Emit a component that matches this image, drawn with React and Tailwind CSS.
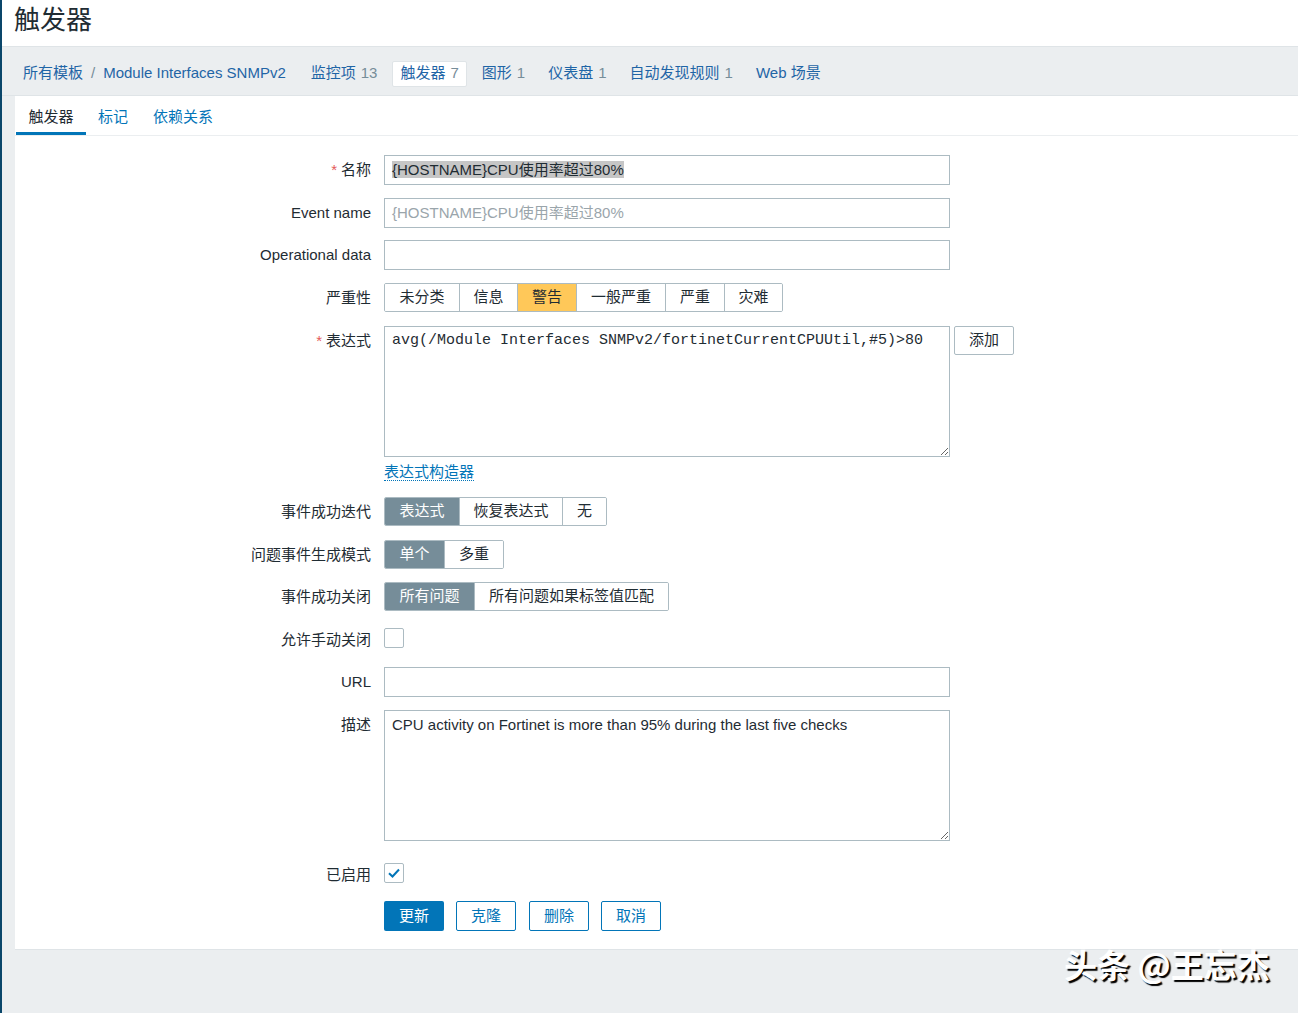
import React from "react";

const F = { fontFamily: '"Liberation Sans", Arial, "Noto Sans CJK SC", sans-serif' };

function Label({ children, req }) {
  return (
    <div className="w-[369px] shrink-0 pr-[13px] text-right text-[15px] leading-[30px] text-[#1f2c33]">
      {req && <span className="mr-[4px] text-[#e45959]">*</span>}
      {children}
    </div>
  );
}

function Row({ label, req, mt, children }) {
  return (
    <div className="flex items-start" style={{ marginTop: mt }}>
      <Label req={req}>{label}</Label>
      <div className="flex items-start">{children}</div>
    </div>
  );
}

function Seg({ items, active, activeCls }) {
  return (
    <div className="flex h-[29px] rounded-[2px] border border-[#acbbc2] overflow-hidden">
      {items.map(([t, w], i) => (
        <div
          key={t}
          className={
            "flex items-center justify-center text-[15px] " +
            (i > 0 ? "border-l border-[#acbbc2] " : "") +
            (i === active ? activeCls : "bg-white text-[#1f2c33]")
          }
          style={{ width: w }}
        >
          {t}
        </div>
      ))}
    </div>
  );
}

function Box({ children, cls = "" }) {
  return (
    <div className={"w-[566px] h-[30px] border border-[#acbbc2] bg-white px-[7px] text-[15px] leading-[28px] " + cls}>
      {children}
    </div>
  );
}

export default function App() {
  const nav = [
    ["监控项", "13"],
    ["触发器", "7", true],
    ["图形", "1"],
    ["仪表盘", "1"],
    ["自动发现规则", "1"],
    ["Web 场景", ""],
  ];
  return (
    <div className="relative flex min-h-[1013px] w-[1298px] bg-[#ebeef0] overflow-hidden" style={F}>
      <div className="w-[2px] shrink-0 bg-[#0a466a]" />
      <div className="flex flex-1 flex-col">
        <div className="h-[47px] bg-white border-b border-[#dfe4e7] pl-[12px]">
          <div className="text-[26px] leading-[40px] text-[#1f2c33]">触发器</div>
        </div>
        <div className="flex h-[49px] items-center border-b border-[#dfe4e7] pl-[13px] pt-[5px] text-[15px]">
          <div className="px-[8px] text-[#1f65a6]">所有模板</div>
          <div className="text-[#768d99]">/</div>
          <div className="px-[8px] text-[#1f65a6] mr-[9px]">Module Interfaces SNMPv2</div>
          {nav.map(([t, n, act]) => (
            <div
              key={t}
              className={
                "mr-[7px] flex h-[26px] items-center px-[7px] rounded-[2px] border " +
                (act ? "bg-white border-[#dfe4e7] text-[#1f65a6]" : "border-transparent text-[#1f65a6]")
              }
            >
              {t}
              {n && <span className="ml-[5px] text-[#768d99]">{n}</span>}
            </div>
          ))}
        </div>
        <div className="pl-[13px] pb-[63px]">
          <div className="bg-white border-b border-[#dfe4e7] h-[854px]">
            <div className="flex h-[40px] items-end border-b border-[#ebeef0] pl-[1px] text-[15px]">
              <div className="flex h-full w-[70px] flex-col items-center justify-end">
                <div className="pb-[4px] text-[#1f2c33]">触发器</div>
                <div className="h-[3px] w-full bg-[#0275b8]" />
              </div>
              <div className="pb-[7px] pl-[12px] text-[#0275b8]">标记</div>
              <div className="pb-[7px] pl-[25px] text-[#0275b8]">依赖关系</div>
            </div>

            <Row label="名称" req mt="19px">
              <Box>
                <span className="bg-[#c6c6c6] text-[#1f2c33]">{"{HOSTNAME}CPU使用率超过80%"}</span>
              </Box>
            </Row>
            <Row label="Event name" mt="13px">
              <Box cls="text-[#9aa5ab]">{"{HOSTNAME}CPU使用率超过80%"}</Box>
            </Row>
            <Row label="Operational data" mt="12px">
              <Box />
            </Row>
            <Row label="严重性" mt="13px">
              <Seg
                items={[["未分类", 74], ["信息", 58], ["警告", 59], ["一般严重", 89], ["严重", 59], ["灾难", 58]]}
                active={2}
                activeCls="bg-[#ffc859] text-[#1f2c33]"
              />
            </Row>
            <Row label="表达式" req mt="13px">
              <div className="flex flex-col">
                <textarea
                  readOnly
                  defaultValue="avg(/Module Interfaces SNMPv2/fortinetCurrentCPUUtil,#5)>80"
                  className="block h-[131px] w-[566px] border border-[#acbbc2] px-[7px] py-[4px] text-[15px] leading-[20px] text-[#1f2c33] outline-none"
                  style={{ fontFamily: '"Liberation Mono", "Courier New", monospace' }}
                />
                <div className="mt-[3px] h-[22px]">
                  <span className="border-b border-dotted border-[#0275b8] text-[15px] text-[#0275b8] leading-[18px]">
                    表达式构造器
                  </span>
                </div>
              </div>
              <div className="ml-[4px] flex h-[29px] w-[60px] items-center justify-center rounded-[2px] border border-[#acbbc2] text-[15px] text-[#1f2c33]">
                添加
              </div>
            </Row>
            <Row label="事件成功迭代" mt="15px">
              <Seg items={[["表达式", 74], ["恢复表达式", 103], ["无", 44]]} active={0} activeCls="bg-[#768d99] text-white" />
            </Row>
            <Row label="问题事件生成模式" mt="13px">
              <Seg items={[["单个", 59], ["多重", 59]]} active={0} activeCls="bg-[#768d99] text-white" />
            </Row>
            <Row label="事件成功关闭" mt="12px">
              <Seg items={[["所有问题", 89], ["所有问题如果标签值匹配", 194]]} active={0} activeCls="bg-[#768d99] text-white" />
            </Row>
            <Row label="允许手动关闭" mt="13px">
              <div className="mt-[3px] h-[20px] w-[20px] rounded-[2px] border border-[#acbbc2] bg-white" />
            </Row>
            <Row label="URL" mt="12px">
              <Box />
            </Row>
            <Row label="描述" mt="13px">
              <textarea
                readOnly
                defaultValue="CPU activity on Fortinet is more than 95% during the last five checks"
                className="block h-[131px] w-[566px] border border-[#acbbc2] px-[7px] py-[3px] text-[15px] leading-[22px] text-[#1f2c33] outline-none"
                style={F}
              />
            </Row>
            <Row label="已启用" mt="19px">
              <div className="mt-[3px] flex h-[20px] w-[20px] items-center justify-center rounded-[2px] border border-[#acbbc2] bg-white">
                <svg width="14" height="12" viewBox="0 0 14 12">
                  <path d="M2 6.2 L5.5 9.5 L12 2.5" fill="none" stroke="#0275b8" strokeWidth="2" />
                </svg>
              </div>
            </Row>
            <div className="mt-[11px] flex pl-[369px] text-[15px]">
              <div className="flex h-[30px] w-[60px] items-center justify-center rounded-[2px] bg-[#0275b8] text-white">更新</div>
              <div className="ml-[12px] flex h-[30px] w-[60px] items-center justify-center rounded-[2px] border border-[#0275b8] text-[#0275b8]">克隆</div>
              <div className="ml-[13px] flex h-[30px] w-[60px] items-center justify-center rounded-[2px] border border-[#0275b8] text-[#0275b8]">删除</div>
              <div className="ml-[12px] flex h-[30px] w-[60px] items-center justify-center rounded-[2px] border border-[#0275b8] text-[#0275b8]">取消</div>
            </div>
          </div>
        </div>
      </div>
      <div
        className="absolute left-[1064px] top-[940px] text-[33px] font-bold text-white [text-shadow:2px_2px_1px_#000]"
        style={{ fontFamily: '"Noto Sans CJK SC", sans-serif' }}
      >
        头条 @王忘杰
      </div>
    </div>
  );
}
